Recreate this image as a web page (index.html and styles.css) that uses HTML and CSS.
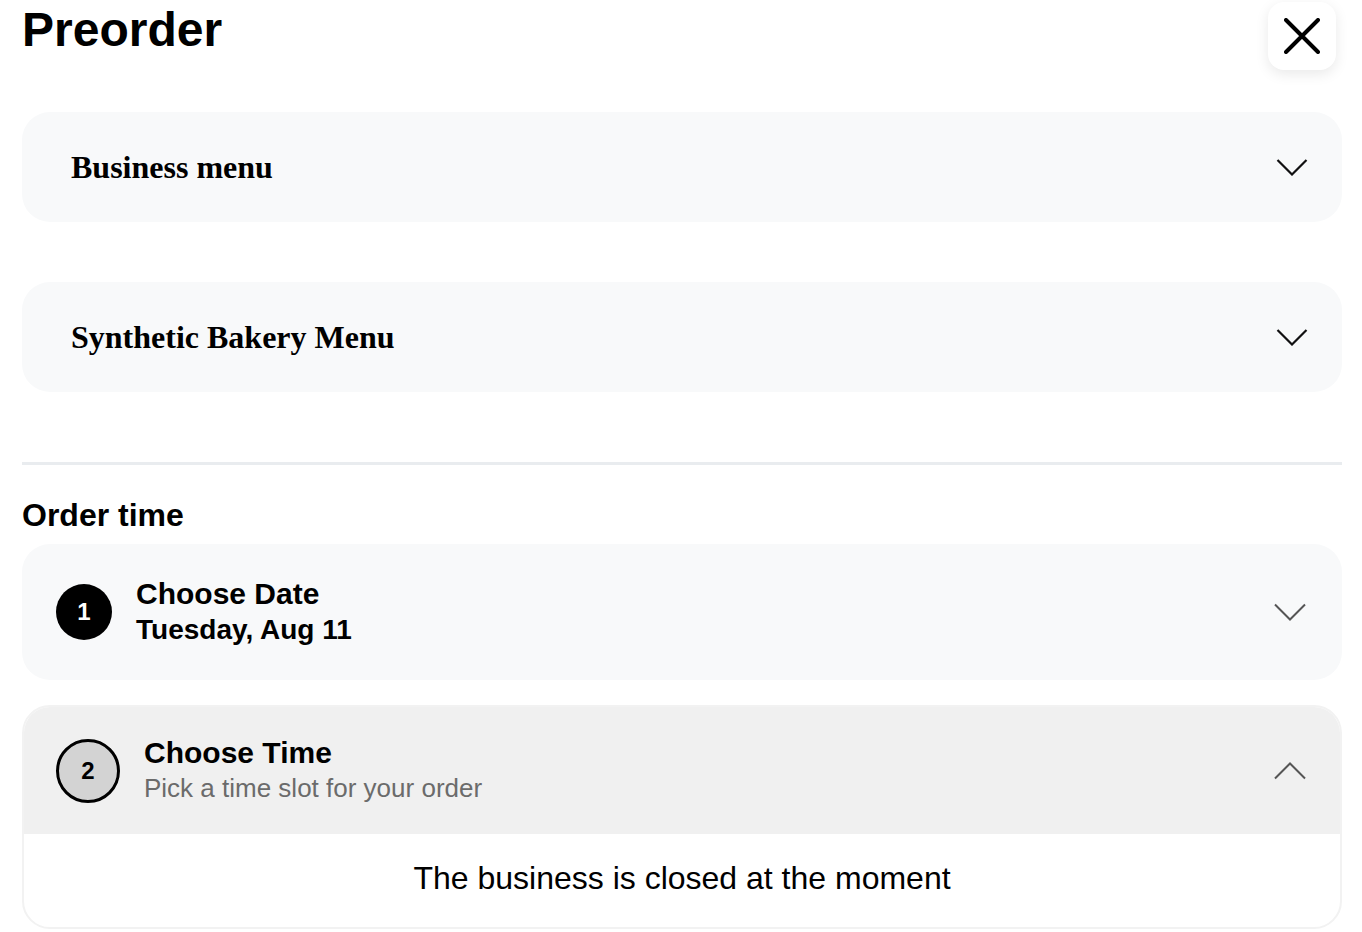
FILE: index.html
```html
<!DOCTYPE html>
<html lang="en">
<head>
<meta charset="utf-8">
<title>Preorder</title>
<link rel="stylesheet" href="styles.css">
</head>
<body>
<div class="page">
  <div class="header">
    <h1 class="title">Preorder</h1>
    <button class="close" aria-label="Close">
      <svg width="36" height="36" viewBox="0 0 36 36"><path d="M2 2 L34 34 M34 2 L2 34" stroke="#000" stroke-width="4" stroke-linecap="round" fill="none"/></svg>
    </button>
  </div>

  <div class="menus">
    <div class="menu-card">
      <span class="menu-title">Business menu</span>
      <svg class="chev" width="32" height="18" viewBox="0 0 32 18"><polyline points="1.5,2 16,16.5 30.5,2" fill="none" stroke="#111" stroke-width="2.2"/></svg>
    </div>
    <div class="menu-card">
      <span class="menu-title">Synthetic Bakery Menu</span>
      <svg class="chev" width="32" height="18" viewBox="0 0 32 18"><polyline points="1.5,2 16,16.5 30.5,2" fill="none" stroke="#111" stroke-width="2.2"/></svg>
    </div>
  </div>

  <div class="divider"></div>

  <h2 class="section-title">Order time</h2>

  <div class="date-card">
    <div class="step">
      <div class="num num-active">1</div>
      <div class="step-text">
        <div class="step-title">Choose Date</div>
        <div class="step-value">Tuesday, Aug 11</div>
      </div>
    </div>
    <svg class="chev-grey" width="32" height="18" viewBox="0 0 32 18"><polyline points="1,1.5 16,16.5 31,1.5" fill="none" stroke="#555" stroke-width="2"/></svg>
  </div>

  <div class="time-card">
    <div class="time-head">
      <div class="step">
        <div class="num num-pending">2</div>
        <div class="step-text step-text-time">
          <div class="step-title">Choose Time</div>
          <div class="step-sub">Pick a time slot for your order</div>
        </div>
      </div>
      <svg class="chev-grey" width="32" height="18" viewBox="0 0 32 18"><polyline points="1,16.5 16,1.5 31,16.5" fill="none" stroke="#555" stroke-width="2"/></svg>
    </div>
    <div class="time-body">The business is closed at the moment</div>
  </div>
</div>
</body>
</html>
```
FILE: styles.css
```css
* { box-sizing: border-box; }

body {
  margin: 0;
  background: #fff;
  font-family: "Liberation Sans", Arial, sans-serif;
  color: #000;
}

.page {
  padding: 2px 20px 0 22px;
}

.header {
  display: flex;
  justify-content: space-between;
  align-items: flex-start;
  height: 68px;
}

.title {
  margin: 0;
  font-size: 48px;
  line-height: 55px;
  font-weight: 700;
}

.close {
  width: 68px;
  height: 68px;
  margin-right: 6px;
  border: none;
  border-radius: 16px;
  background: #fff;
  box-shadow: 0 4px 14px rgba(0, 0, 0, 0.09);
  display: flex;
  align-items: center;
  justify-content: center;
  padding: 0;
}

.menus {
  margin-top: 42px;
  display: flex;
  flex-direction: column;
  gap: 60px;
}

.menu-card {
  height: 110px;
  border-radius: 28px;
  background: #f8f9fa;
  display: flex;
  align-items: center;
  justify-content: space-between;
  padding: 0 34px 0 49px;
}

.menu-title {
  font-family: "Liberation Serif", "Times New Roman", serif;
  font-weight: 700;
  font-size: 32px;
}

.chev { display: block; }

.divider {
  margin-top: 70px;
  height: 3px;
  background: #e9ecef;
}

.section-title {
  margin: 32px 0 0;
  font-size: 32px;
  line-height: 37px;
  font-weight: 700;
}

.date-card {
  margin-top: 10px;
  height: 136px;
  border-radius: 28px;
  background: #f8f9fa;
  display: flex;
  align-items: center;
  justify-content: space-between;
  padding: 0 36px 0 34px;
}

.step {
  display: flex;
  align-items: center;
  gap: 24px;
}

.num {
  border-radius: 50%;
  display: flex;
  align-items: center;
  justify-content: center;
  font-weight: 700;
  font-size: 24px;
  flex-shrink: 0;
}

.num-active {
  width: 56px;
  height: 56px;
  background: #000;
  color: #fff;
}

.num-pending {
  width: 64px;
  height: 64px;
  background: #d3d3d3;
  border: 3px solid #000;
  color: #000;
}

.step-title {
  font-size: 30px;
  font-weight: 700;
  line-height: 35px;
}

.step-value {
  font-size: 28px;
  font-weight: 700;
  line-height: 38px;
}

.step-text-time {
  margin-bottom: 3px;
}

.step-sub {
  margin-top: 3px;
  font-size: 26px;
  line-height: 30px;
  color: #6b6b6b;
}

.chev-grey { display: block; }

.time-card {
  margin-top: 25px;
  border: 2px solid #f2f2f2;
  border-radius: 28px;
  overflow: hidden;
  background: #fff;
}

.time-head {
  height: 127px;
  background: #f0f0f0;
  display: flex;
  align-items: center;
  justify-content: space-between;
  padding: 0 34px 0 32px;
}

.time-body {
  height: 93px;
  padding-bottom: 5px;
  display: flex;
  align-items: center;
  justify-content: center;
  font-size: 32px;
}
```
